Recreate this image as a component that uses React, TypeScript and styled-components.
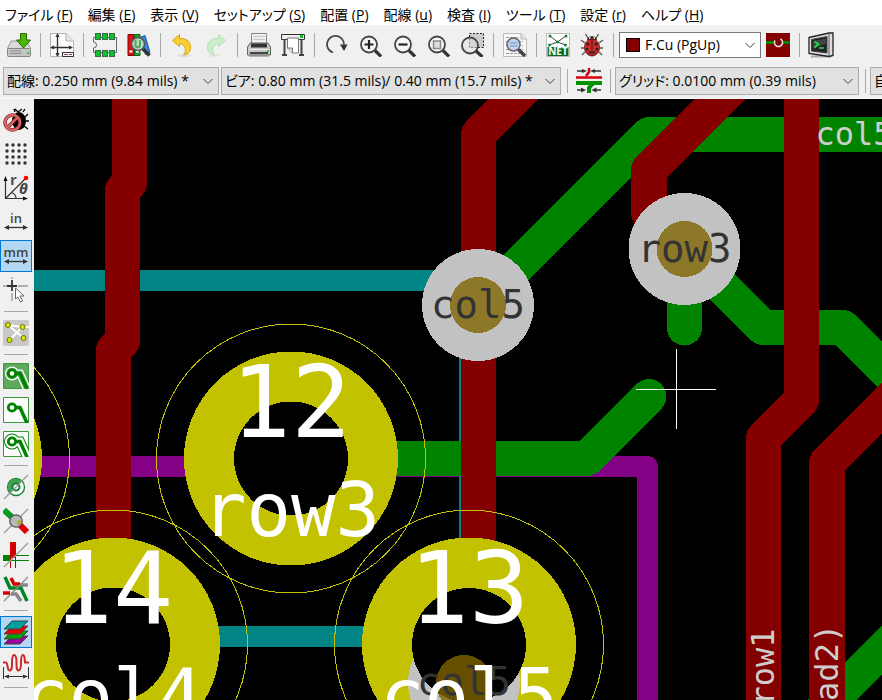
import React from 'react';
import styled, { createGlobalStyle } from 'styled-components';

const uiFont = '"Open Sans", "Noto Sans CJK JP", sans-serif';
const boardFont = '"DejaVu Sans Mono", monospace';

const GlobalStyle = createGlobalStyle`
  html, body, #root { height: 100%; margin: 0; }
  body { overflow: hidden; background: #f0f0f0; color: #000; font: 14px/20px ${uiFont}; }
  *, *::before, *::after { box-sizing: border-box; }
`;

const Window = styled.div`
  display: flex;
  flex-direction: column;
  height: 100vh;
  overflow: hidden;
`;

const MenuBar = styled.nav`
  display: flex;
  flex: none;
  align-items: center;
  gap: 15px;
  height: 25px;
  padding: 4px 5px 0;
  background: #fff;
`;

const MenuItem = styled.button`
  flex: none;
  padding: 0;
  border: 0;
  background: none;
  color: #000;
  font: 14px/20px ${uiFont};
  font-feature-settings: 'palt';
  white-space: nowrap;
`;

const ToolBar = styled.div`
  display: flex;
  flex: none;
  align-items: center;
  height: 40px;
  padding-left: 2px;
`;

const OptionBar = styled(ToolBar)`
  height: 34px;
  padding: 0 0 1px 3px;
  border-bottom: 1px solid #fafafa;
`;

const ToolButton = styled.button`
  display: flex;
  flex: none;
  align-items: center;
  justify-content: center;
  width: 34px;
  height: 34px;
  padding: 0;
  border: 0;
  background: none;
`;

const SideButton = styled.button<{ $active?: boolean }>`
  display: flex;
  flex: none;
  align-items: center;
  justify-content: center;
  width: 32px;
  height: 32px;
  margin: 1px 0;
  padding: 0;
  border: 1px solid ${(p) => (p.$active ? '#0078d7' : 'transparent')};
  background: ${(p) => (p.$active ? '#b3d7f3' : 'none')};
`;

const Separator = styled.span`
  flex: none;
  width: 1px;
  height: 24px;
  margin: 0 4px;
  background: #a8a8a8;
`;

const SideSeparator = styled.span`
  flex: none;
  width: 24px;
  height: 1px;
  margin: 4px;
  background: #a8a8a8;
`;

const Combo = styled.label<{ $width: number; $light?: boolean }>`
  display: grid;
  flex: none;
  grid-template-columns: ${(p) => (p.$light ? '14px' : '0')} 1fr 12px;
  align-items: center;
  width: ${(p) => p.$width}px;
  height: ${(p) => (p.$light ? 26 : 28)}px;
  margin: ${(p) => (p.$light ? '0 0 0 1px' : '0 2px 0 0')};
  padding: 0 4px 0 ${(p) => (p.$light ? 6 : 3)}px;
  border: 1px solid ${(p) => (p.$light ? '#7a7a7a' : '#adadad')};
  background: ${(p) => (p.$light ? '#fff' : '#e1e1e1')};

  select {
    grid-column: 2 / 4;
    grid-row: 1;
    width: 100%;
    padding: 0 14px 0 ${(p) => (p.$light ? 5 : 0)}px;
    appearance: none;
    border: 0;
    outline: 0;
    background: transparent;
    color: #000;
    font: 14px/20px ${uiFont};
    font-feature-settings: 'palt';
  }
  svg {
    grid-column: 3;
    grid-row: 1;
    pointer-events: none;
  }
`;

const Swatch = styled.span`
  grid-column: 1;
  grid-row: 1;
  width: 14px;
  height: 14px;
  border: 1px solid #000;
  background: #840000;
`;

const Workspace = styled.div`
  display: flex;
  flex: 1;
  min-height: 0;
`;

const SideBar = styled.aside`
  display: flex;
  flex: none;
  flex-direction: column;
  width: 34px;
  padding-top: 4px;
  overflow: hidden;
`;

const Board = styled.main`
  flex: 1;
  min-width: 0;
  overflow: hidden;
  background: #000;

  svg { display: block; width: 100%; height: 100%; }
`;

const BoardText = styled.text`
  font-family: ${boardFont};
  text-anchor: middle;
`;

type IconProps = { size?: number; children: React.ReactNode };
const Icon = ({ size = 24, children }: IconProps) => (
  <svg width={size} height={size} viewBox={`0 0 ${size} ${size}`} fill="none" aria-hidden="true">
    {children}
  </svg>
);

const Side = ({ children }: { children: React.ReactNode }) => <Icon size={26}>{children}</Icon>;

const Chevron = () => (
  <svg width="12" height="12" viewBox="0 0 12 12" fill="none" aria-hidden="true">
    <path d="M1.5 4 6 8.500 10.500 4" stroke="#444" />
  </svg>
);

const SaveIcon = () => (
  <Icon>
    <path d="M4 8h16l3.500 7.500H.500z" fill="#d9d9d9" stroke="#999" />
    <rect x=".5" y="15.500" width="23" height="8" rx="1" fill="#c4c4c4" stroke="#858585" />
    <path d="M3 18h11M3 20.500h11" stroke="#8e8e8e" />
    <path d="M20 20h2" stroke="#3c3" strokeWidth="2" />
    <path d="M13.500.5h6v6.500h4L16.500 15 9.500 7h4z" fill="#4cb805" stroke="#236800" />
  </Icon>
);

const PageIcon = () => (
  <Icon>
    <path d="M.5.5H16L23.500 8v15.500H.500z" fill="#fafafa" stroke="#b5b5b5" />
    <path d="M16 .5V8h7.500" fill="#e4e4e4" stroke="#b5b5b5" />
    <path d="M7.500 2v21M2 14.500h19" stroke="#333" strokeWidth="1.300" />
    <path d="m7.500 0-2 4h4zM7.500 24l-2-4h4zM0 14.500l4-2v4zM23 14.500l-4-2v4z" fill="#333" />
    <path d="M12.500 19.500h11v4h-11z" fill="#fff" stroke="#333" />
    <path d="M14 21.500h4m1 0h3" stroke="#a33" />
  </Icon>
);

const FootprintIcon = () => (
  <Icon>
    <path d="M3 4.500H.500V9a3 3 0 0 1 0 6v4.500H3M21 4.500h2.500v15H21M2 4.500h20M2 19.500h20" stroke="#666" />
    {[3, 10, 17].map((x) => (
      <g key={x} fill="#0ac232" stroke="#3a6a44">
        <rect x={x - 0.5} y=".5" width="5" height="6" />
        <rect x={x - 0.5} y="17.500" width="5" height="6" />
      </g>
    ))}
  </Icon>
);

const LibraryIcon = () => (
  <Icon>
    <path d="M1 1.500h6v21H1z" fill="#d91414" stroke="#800" />
    <path d="M7.500 1.500h5.500v21H7.500z" fill="#19a52b" stroke="#08641a" />
    <path d="m14 4 4-1.500 5 17-4.500 2z" fill="#3485e5" stroke="#1755a5" />
    <path d="M2.500 18.500h3M9 18.500h3" stroke="#fff" strokeWidth="2" />
    <circle cx="11" cy="11" r="6.500" fill="#c6dfcf" fillOpacity=".9" stroke="#555" strokeWidth="1.500" />
    <path d="M8.500 7v5c0 3 4.500 3 4.500 0V7" stroke="#53a85f" strokeWidth="2" />
    <path d="m16 16 6.500 6.500" stroke="#333" strokeWidth="3.500" />
  </Icon>
);

const arrowPath = 'M2.500 7.500 9.500 1.500V5.500C17 5 21 9.500 20.500 15.500C20 19.500 17.500 21.500 13.500 22C16.500 18.500 16.500 11.500 9.500 10.500V13.500z';

const UndoIcon = () => (
  <Icon>
    <ellipse cx="14" cy="22.500" rx="7" ry="1.500" fill="#ddd" />
    <path d={arrowPath} fill="#f7cf32" stroke="#dba50a" />
  </Icon>
);

const RedoIcon = () => (
  <Icon>
    <ellipse cx="10" cy="22.500" rx="7" ry="1.500" fill="#e6e6e6" />
    <path d={arrowPath} transform="matrix(-1 0 0 1 24 0)" fill="#cdeccb" stroke="#b5dfb5" />
  </Icon>
);

const PrintIcon = () => (
  <Icon>
    <path d="M4.500.5h15v12h-15z" fill="#eee" stroke="#888" />
    <path d="M6 3.500h12M6 6.500h12" stroke="#c8c8c8" />
    <path d="M3 10h18l2.500 4v8h-23v-8z" fill="#c6c6c6" stroke="#666" />
    <path d="M4 10.500h16v4H4z" fill="#333" />
    <path d="M2 16.500h20" stroke="#eee" />
    <path d="M3 19h18v2H3z" fill="#444" />
    <path d="M20 18h2" stroke="#3c3" strokeWidth="2" />
    <path d="M2 23h20" stroke="#777" />
  </Icon>
);

const PlotIcon = () => (
  <Icon>
    <path d="M.5 1.500h23v5H.500z" fill="#eee" stroke="#333" />
    <path d="M19 3.500h3" stroke="#19bd28" strokeWidth="3" />
    <path d="M3.500 6v16M20.500 6v16" stroke="#444" strokeWidth="2" />
    <path d="M1 22h5M18 22h5" stroke="#444" strokeWidth="2" />
    <path d="M6.500 5h11v15h-6l-5-5z" fill="#fff" stroke="#777" />
    <path d="M11.500 20v-5h-5" fill="#ddd" stroke="#777" />
  </Icon>
);

const RefreshIcon = () => (
  <Icon>
    <path d="M9 19.500a8.500 8.500 0 1 1 11-8" stroke="#444" strokeWidth="1.800" />
    <path d="M16 11.500h7.500L20 18z" fill="#333" />
  </Icon>
);

const Magnifier = ({ cx = 11 }: { cx?: number }) => (
  <>
    <circle cx={cx} cy="11.500" r="8" fill="#f5f5f5" stroke="#444" strokeWidth="1.800" />
    <path d={`m${cx + 6} 17.500 6 6`} stroke="#333" strokeWidth="3.200" />
  </>
);

const ZoomInIcon = () => (
  <Icon><Magnifier /><path d="M6.500 11.500h9M11 7v9" stroke="#222" strokeWidth="2.200" /></Icon>
);
const ZoomOutIcon = () => (
  <Icon><Magnifier /><path d="M6.500 11.500h9" stroke="#222" strokeWidth="2.200" /></Icon>
);
const ZoomFitIcon = () => (
  <Icon><Magnifier /><path d="M7.500 8h7v7.500h-7z" fill="#ddd" stroke="#888" strokeWidth="1.500" /></Icon>
);
const ZoomAreaIcon = () => (
  <Icon>
    <path d="M9.500.5h14v14h-14z" fill="#ccc" stroke="#222" strokeDasharray="2 1.500" />
    <circle cx="10" cy="12.500" r="8" fill="#ddd" fillOpacity=".5" stroke="#444" strokeWidth="1.800" />
    <path d="m16 18 6.500 6" stroke="#333" strokeWidth="3.200" />
  </Icon>
);

const FindIcon = () => (
  <Icon>
    <path d="M.5.5H18L23.500 6v17.500H.500z" fill="#f7f7f7" stroke="#bbb" />
    <path d="M18 .5V6h5.500" fill="#e0e0e0" stroke="#bbb" />
    <path d="M3 4.500h13M3 8.500h17M3 12.500h17M3 16.500h17M3 20.500h17" stroke="#999" strokeDasharray="3 1" />
    <circle cx="10.500" cy="11.500" r="6.500" fill="#bcd2ec" fillOpacity=".9" stroke="#666" strokeWidth="1.500" />
    <path d="M6.500 10h8M6.500 13h8" stroke="#7192c5" />
    <path d="m15.500 16.500 6.500 6.500" stroke="#444" strokeWidth="3.500" />
  </Icon>
);

const NetIcon = () => (
  <Icon>
    <path d="M.5.5h23v23H.500z" fill="#fff" stroke="#bbb" />
    <path d="M4 3 11.500 9 20 3M3 12l8.500-3 8 3" stroke="#444" />
    <g fill="#16862e">
      <circle cx="4" cy="3" r="1.500" /><circle cx="20" cy="3" r="1.500" /><circle cx="11.500" cy="9" r="1.500" />
      <circle cx="3.500" cy="12" r="1.500" /><circle cx="19.500" cy="12" r="1.500" />
      <path d="M1.500 14h21v9h-21z" fill="#0b6c20" />
    </g>
    <text x="12" y="22" textAnchor="middle" fill="#fff" fontFamily="Open Sans" fontSize="10" fontWeight="700">NET</text>
  </Icon>
);

const LadybugIcon = () => (
  <Icon>
    <path d="M8 5 5.500 1M16 5l2.500-4M5 10 1 7M19 10l4-3M4 15H1M20 15h3M5 19l-3 3M19 19l3 3" stroke="#555" strokeWidth="1.300" />
    <path d="M7 7c0-5 10-5 10 0z" fill="#333" />
    <path d="M9 5h1.500M13.500 5H15" stroke="#ffc" strokeWidth="1.500" />
    <ellipse cx="12" cy="14.500" rx="7.500" ry="8.500" fill="#cf2a2e" stroke="#7a1518" />
    <path d="M12 6v17" stroke="#4c1515" />
    <g fill="#321">
      <circle cx="8" cy="11" r="1.600" /><circle cx="16" cy="11" r="1.600" /><circle cx="7" cy="16" r="1.600" />
      <circle cx="17" cy="16" r="1.600" /><circle cx="10" cy="19.500" r="1.300" /><circle cx="14" cy="19.500" r="1.300" />
    </g>
  </Icon>
);

const LayerPairIcon = () => (
  <Icon>
    <path d="M0 0h24v24H0z" fill="#840000" />
    <path d="M0 9.500h24" stroke="#008400" strokeWidth="3" />
    <circle cx="12.500" cy="9.500" r="4" fill="#840000" />
    <path d="M9 7.500a4 4 0 1 0 5.500-1.500" stroke="#ddd" strokeWidth="1.700" />
  </Icon>
);

const ConsoleIcon = () => (
  <Icon size={26}>
    <path d="M3 24.500h20" stroke="#aaa" strokeWidth="2" />
    <path d="m1 5.500 20-4.500h4v22.500l-4 1L1 21.500z" fill="#ddd" stroke="#222" strokeWidth="1.300" />
    <path d="M21 1v23.500" stroke="#555" />
    <path d="m3.500 7.500 15.500-3v16.500l-15.500-2z" fill="#222" stroke="#444" />
    <path d="m5 9 13-2.500v5L5 17z" fill="#444" />
    <path d="m6.500 9.500 4 2.500-4 3.500M11 16h5" stroke="#13e04a" strokeWidth="1.700" />
  </Icon>
);

const TrackViaIcon = () => (
  <Side>
    <path d="M0 9.500h26" stroke="#d8000c" strokeWidth="2.500" />
    <path d="M13 0v4l-3 4" stroke="#d8000c" strokeWidth="2.500" />
    <path d="M0 15h26" stroke="#009200" strokeWidth="4" />
    <path d="M18 16h-2l-3 4v5" stroke="#009200" strokeWidth="4" />
    <path d="M1 3h6M18 3h7M1 22h6M19 22h6" stroke="#333" strokeWidth="1.300" />
    <path d="m11 3-5-2v4zM14 3l5-2v4zM10 22l-5-2.500v5zM15.500 22l5-2.500v5z" fill="#333" />
  </Side>
);

const DrcOffIcon = () => (
  <Side>
    <path d="m12 5-1-3M20 5l2-3M22 10l3-3M23 14h3M21 19l4 3M12 2l3 3 4-3" stroke="#000" strokeWidth="1.300" />
    <ellipse cx="16" cy="14" rx="7" ry="9" fill="#000" />
    <circle cx="9.500" cy="15.500" r="7.500" stroke="#7f2020" strokeWidth="3.600" />
    <path d="m4 21 11-11" stroke="#7f2020" strokeWidth="3.600" />
    <circle cx="9.500" cy="15.500" r="7.500" stroke="#d96363" strokeWidth="2.400" />
    <path d="m4 21 11-11" stroke="#d96363" strokeWidth="2.400" />
  </Side>
);

const GridIcon = () => (
  <Side>
    {[4, 10, 16, 22].flatMap((y) => [4, 10, 16, 22].map((x) => (
      <circle key={`${x}-${y}`} cx={x} cy={y} r="1.700" fill="#333" />
    )))}
  </Side>
);

const PolarIcon = () => (
  <Side>
    <path d="M2.500 4v19.500H23M2.500 23.500 22 4M8.500 17.500c3 1 4.500 3 4.500 6" stroke="#333" strokeWidth="1.200" />
    <path d="m2.500 1-2 5h4zM25 23.500l-5-2v4z" fill="#111" />
    <circle cx="23" cy="3" r="2.300" fill="#f00" />
    <text x="7" y="10" fill="#555" fontFamily="Open Sans" fontSize="15" fontWeight="700">r</text>
    <text x="16" y="19" fill="#444" fontFamily="Open Sans" fontSize="15" fontWeight="700" fontStyle="italic">θ</text>
  </Side>
);

const UnitIcon = ({ unit }: { unit: string }) => (
  <Side>
    <text x="13" y="14" textAnchor="middle" fill="#444" fontFamily="Open Sans" fontSize="13" fontWeight="600">{unit}</text>
    <path d="M4 18.500h18" stroke="#333" strokeWidth="1.300" />
    <path d="m1 18.500 5-2.500v5zM25 18.500l-5-2.500v5z" fill="#333" />
  </Side>
);

const CursorIcon = () => (
  <Side>
    <path d="M9 0v2M9 16v8M0 9h4M15 9h10" stroke="#999" strokeWidth="1.300" />
    <path d="M9 3v11M4 9h10" stroke="#333" strokeWidth="1.800" />
    <path d="M12.500 11v11l2.500-2 2.500 5 2-1-2.500-5h4z" fill="#fff" stroke="#666" />
  </Side>
);

const RatsnestIcon = () => (
  <Side>
    <rect width="26" height="26" rx="2" fill="#c8c8c8" />
    <path d="m5 5 15.500 13M6.500 20l13-13M5 5l14.500 2H26" stroke="#fff" strokeWidth="1.800" />
    {[[5, 5], [19.5, 7], [6.5, 20], [20.5, 18]].map(([x, y]) => (
      <circle key={x} cx={x} cy={y} r="2.500" fill="#d5e600" stroke="#6b7300" />
    ))}
  </Side>
);

const padTrack = 'M9 10.500h8L24 26';

const ZoneIcon = ({ kind }: { kind: 'filled' | 'empty' | 'outline' }) => (
  <Side>
    <path d="M.5.5h25v25H.500z" fill={kind === 'filled' ? '#5daa5d' : '#fafafa'} stroke="#3c9a3c" />
    {kind === 'outline' && (
      <>
        <circle cx="9" cy="10.500" r="8" fill="#008400" />
        <path d={padTrack} stroke="#008400" strokeWidth="10" />
      </>
    )}
    {kind !== 'empty' && (
      <>
        <circle cx="9" cy="10.500" r="7" fill="#fff" />
        <path d={padTrack} stroke="#fff" strokeWidth="8" />
      </>
    )}
    {kind === 'filled' && (
      <>
        <circle cx="9" cy="10.500" r="5.800" fill="#5daa5d" />
        <path d={padTrack} stroke="#5daa5d" strokeWidth="5.500" />
      </>
    )}
    <path d={padTrack} stroke="#008400" strokeWidth="3.500" />
    <circle cx="9" cy="10.500" r="3.700" fill="#fff" stroke="#008400" strokeWidth="2.800" />
  </Side>
);

const PadSketchIcon = () => (
  <Side>
    <circle cx="13" cy="13" r="8.500" fill="#fff" stroke="#178336" strokeWidth="1.300" />
    <path d="M7 19A8.500 8.500 0 0 1 19 7z" fill="#3da34d" />
    <circle cx="13" cy="13" r="3.500" fill="#fff" stroke="#178336" strokeWidth="2" />
    <path d="M1 25 25 1" stroke="#999" strokeWidth="1.300" />
  </Side>
);

const ViaSketchIcon = () => (
  <Side>
    <path d="m1 2 10 9" stroke="#009b20" strokeWidth="6" />
    <path d="m15 15 9 9" stroke="#e00000" strokeWidth="6" />
    <path d="M1 25 25 1" stroke="#999" strokeWidth="1.300" />
    <circle cx="13" cy="13" r="6.200" fill="#b9b9b9" stroke="#555" strokeWidth="1.300" />
    <path d="M14 17v-3l2-2 2 1-1 3z" fill="#b5b500" />
  </Side>
);

const TrackSketchIcon = () => (
  <Side>
    <path d="M7 0h6v16H7z" fill="#d40000" />
    <path d="M7.500 16v10M12.500 16v10" stroke="#c00000" />
    <path d="M0 13h7v6H0z" fill="#008400" />
    <path d="M13 13.500h13M7 18.500h19" stroke="#008400" />
    <path d="M1 25 25 1" stroke="#999" strokeWidth="1.300" />
  </Side>
);

const ContrastIcon = () => (
  <Side>
    <path d="M17 9h8M8 18h5l5 7" stroke="#888" strokeWidth="3.500" />
    <path d="m8 2 3 6h6M0 17h7" stroke="#d40000" strokeWidth="3.500" />
    <path d="m2 1 5 11h11l6 13" stroke="#008426" strokeWidth="3.500" />
    <path d="M1 25 25 1" stroke="#888" strokeWidth="1.300" />
  </Side>
);

const LayersIcon = () => (
  <Side>
    {[['#a000a0', 17], ['#00a000', 12], ['#ed0000', 7], ['#00a0a0', 2]].map(([fill, y]) => (
      <path key={y} d={`M9 ${y}h16l-8 8H1z`} fill={String(fill)} stroke="#444" />
    ))}
  </Side>
);

const TuneIcon = () => (
  <Side>
    <path d="M0 9.500h3c2 0 1 8 3.500 8S9 14 9 10s0-8 2-8 2.500 3 2.500 7.500 0 8 2 8S18 14 18 10s0-8 2-8 1.500 4 2 7.500h4" stroke="#c9282d" strokeWidth="2" />
    <path d="M.5 14v12M25.500 14v12M3 23.500h20" stroke="#333" />
    <path d="m1 23.500 5-2v4zM25 23.500l-5-2v4z" fill="#333" />
  </Side>
);

type Tool = [string, React.ReactNode] | null;

const tools: Tool[] = [
  ['保存', <SaveIcon />], null,
  ['ページ設定', <PageIcon />], null,
  ['フットプリントエディター', <FootprintIcon />],
  ['フットプリントビューアー', <LibraryIcon />], null,
  ['元に戻す', <UndoIcon />], ['やり直す', <RedoIcon />], null,
  ['印刷', <PrintIcon />], ['プロット', <PlotIcon />], null,
  ['再描画', <RefreshIcon />], ['拡大', <ZoomInIcon />], ['縮小', <ZoomOutIcon />],
  ['全体表示', <ZoomFitIcon />], ['選択範囲を拡大', <ZoomAreaIcon />], null,
  ['検索', <FindIcon />], null,
  ['ネットリスト', <NetIcon />], ['DRC', <LadybugIcon />], null,
];

type SideTool = [string, React.ReactNode, boolean?] | null;

const sideTools: SideTool[] = [
  ['DRC オフ', <DrcOffIcon />], ['グリッド', <GridIcon />], ['極座標', <PolarIcon />],
  ['インチ', <UnitIcon unit="in" />], ['ミリメートル', <UnitIcon unit="mm" />, true],
  ['カーソル形状', <CursorIcon />], null,
  ['ラッツネスト', <RatsnestIcon />], null,
  ['塗りつぶし', <ZoneIcon kind="filled" />], ['ゾーン非表示', <ZoneIcon kind="empty" />],
  ['ゾーン外形', <ZoneIcon kind="outline" />], null,
  ['パッド外形', <PadSketchIcon />], ['ビア外形', <ViaSketchIcon />],
  ['配線外形', <TrackSketchIcon />], ['ハイコントラスト', <ContrastIcon />], null,
  ['レイヤー', <LayersIcon />, true], ['マイクロ波', <TuneIcon />], null,
];

const menus = [
  ['ファイル', 'F'], ['編集', 'E'], ['表示', 'V'], ['セットアップ', 'S'], ['配置', 'P'],
  ['配線', 'u'], ['検査', 'I'], ['ツール', 'T'], ['設定', 'r'], ['ヘルプ', 'H'],
];

type ComboBoxProps = { label: string; value: string; width: number; light?: boolean };
const ComboBox = ({ label, value, width, light }: ComboBoxProps) => (
  <Combo $width={width} $light={light}>
    {light && <Swatch />}
    <select aria-label={label} defaultValue={value}><option>{value}</option></select>
    <Chevron />
  </Combo>
);

type PadProps = { x: number; y: number; number?: string; net?: string; children?: React.ReactNode };
const Pad = ({ x, y, number, net, children }: PadProps) => (
  <g>
    <g shapeRendering="crispEdges">
      <circle cx={x} cy={y} r="134.500" fill="none" stroke="#c2c200" />
      <circle cx={x} cy={y} r="107" fill="#c2c200" />
      {!children && <circle cx={x} cy={y} r="57" fill="#000" />}
    </g>
    {children}
    <BoardText x={x} y={y - 22} fontSize="100" fill="#fff">{number}</BoardText>
    <BoardText x={x} y={y + 77} fontSize="74" fill="#fff">{net}</BoardText>
  </g>
);

const Via = ({ x, y, net }: { x: number; y: number; net: string }) => (
  <g>
    <g shapeRendering="crispEdges">
      <circle cx={x} cy={y} r="56" fill="#c2c2c2" />
      <circle cx={x} cy={y} r="28" fill="#8c7828" />
    </g>
    <BoardText x={x} y={y + 13} fontSize="39" fill="#333">{net}</BoardText>
  </g>
);

const BoardDrawing = () => (
  <svg role="img" aria-label="基板">
    <defs>
      <clipPath id="hole13"><circle cx="469" cy="645" r="57" /></clipPath>
    </defs>
    {/* Board coordinates are offset from the viewport origin. */}
    <g transform="translate(-34 -99)">
      <g fill="none" strokeLinecap="round" strokeLinejoin="round" shapeRendering="crispEdges">
        <path d="M20 466.500H647.500V720" stroke="#840084" strokeWidth="21" />
        <path d="M20 280.500H469.500V636.500H200" stroke="#008484" strokeWidth="21" />
        <g stroke="#008400" strokeWidth="35">
          <path d="M478 305.500 649 134.500H920" />
          <path d="M684.500 249 763 327.500H843L920 404.500" />
          <path d="M684.500 249V328" />
          <path d="M291 458.500H587L649 396.500" />
          <path d="M920 612 810 722" />
        </g>
        <g stroke="#840000" strokeWidth="35">
          <path d="M129.500 80V183L122.500 190V341L113.500 350V640" />
          <path d="M532.500 80 478.500 134V600" />
          <path d="M739 80 649 170V213L684.500 249" strokeWidth="36" />
          <path d="M801.500 80V400L763.500 438V720" />
          <path d="M910 380 827 463V720" strokeWidth="36" />
        </g>
      </g>

      <BoardText x="854" y="145" fontSize="32" fill="#cecece">col5</BoardText>
      <BoardText transform="translate(774 667) rotate(-90)" fontSize="32" fill="#cecece">row1</BoardText>
      <BoardText transform="translate(838 672) rotate(-90)" fontSize="32" fill="#cecece">Pad2)</BoardText>

      <Via x={478} y={305} net="col5" />
      <Via x={684.5} y={249} net="row3" />

      <Pad x={-65} y={458.5} />
      <Pad x={291} y={458.5} number="12" net="row3" />
      <Pad x={113} y={644.5} number="14" net="col4" />
      <Pad x={469} y={644.5} number="13" net="col5">
        <g shapeRendering="crispEdges">
          <circle cx="464" cy="683" r="56" fill="#c2c2c2" />
          <circle cx="464" cy="683" r="28" fill="#8c7828" />
          <circle cx="469" cy="645" r="57" fill="#000" />
          <circle cx="464" cy="683" r="28" fill="#665000" clipPath="url(#hole13)" />
        </g>
        <BoardText x="464" y="695" fontSize="39" fill="#333">col5</BoardText>
      </Pad>

      <path d="M636 389.500h80M676.500 349v80" stroke="#fff" shapeRendering="crispEdges" />
    </g>
  </svg>
);

export default function App() {
  return (
    <Window>
      <GlobalStyle />
      <MenuBar>
        {menus.map(([name, key]) => (
          <MenuItem key={name} type="button">{name} (<u>{key}</u>)</MenuItem>
        ))}
      </MenuBar>
      <ToolBar role="toolbar">
        {tools.map((tool, i) => (tool
          ? <ToolButton key={tool[0]} type="button" aria-label={tool[0]}>{tool[1]}</ToolButton>
          : <Separator key={i} />))}
        <ComboBox label="アクティブレイヤー" value="F.Cu (PgUp)" width={142} light />
        <ToolButton type="button" aria-label="レイヤーペア"><LayerPairIcon /></ToolButton>
        <Separator />
        <ToolButton type="button" aria-label="コンソール"><ConsoleIcon /></ToolButton>
      </ToolBar>
      <OptionBar role="toolbar">
        <ComboBox label="配線幅" value="配線: 0.250 mm (9.84 mils) *" width={216} />
        <ComboBox label="ビアサイズ" value="ビア: 0.80 mm (31.5 mils)/ 0.40 mm (15.7 mils) *" width={340} />
        <Separator />
        <ToolButton type="button" aria-label="自動配線幅"><TrackViaIcon /></ToolButton>
        <Separator />
        <ComboBox label="グリッド" value="グリッド: 0.0100 mm (0.39 mils)" width={244} />
        <Separator />
        <ComboBox label="ズーム" value="自動" width={120} />
      </OptionBar>
      <Workspace>
        <SideBar>
          {sideTools.map((tool, i) => (tool
            ? <SideButton key={tool[0]} type="button" aria-label={tool[0]} $active={tool[2]}>{tool[1]}</SideButton>
            : <SideSeparator key={i} />))}
        </SideBar>
        <Board><BoardDrawing /></Board>
      </Workspace>
    </Window>
  );
}
